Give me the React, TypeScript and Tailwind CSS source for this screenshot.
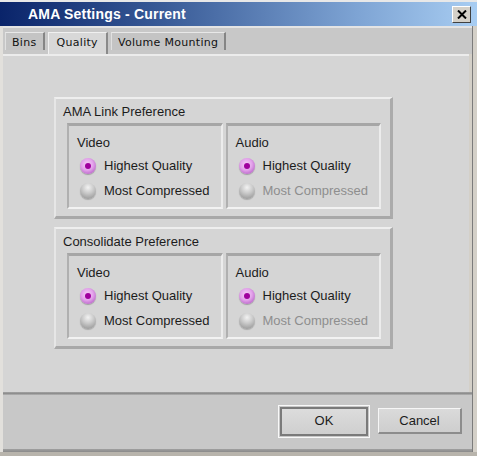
import React from 'react';

const Radio = ({ on }: { on: boolean }) =>
  on ? (
    <span className="w-[16px] h-[16px] shrink-0 rounded-full bg-[radial-gradient(circle_at_45%_40%,#f6d0f8_0%,#e2a2ea_45%,#b45cc4_85%,#9a4aa8_100%)] flex items-center justify-center shadow-[0_1px_1px_rgba(0,0,0,0.25)]">
      <span className="w-[6px] h-[6px] rounded-full bg-[#a0009e]" />
    </span>
  ) : (
    <span className="w-[16px] h-[16px] shrink-0 rounded-full bg-[radial-gradient(circle_at_50%_28%,#f2f2f2_0%,#cbcbcb_40%,#a2a2a2_78%,#828282_100%)] shadow-[0_1px_1px_rgba(0,0,0,0.2)]" />
  );

const Option = ({ on, label, disabled }: { on: boolean; label: string; disabled?: boolean }) => (
  <div className="flex items-center gap-[8px] h-[25px]">
    <Radio on={on} />
    <span className={disabled ? 'text-[#8e8e8e]' : 'text-[#1c1c1c]'}>{label}</span>
  </div>
);

const SubBox = ({ title, disabledSecond }: { title: string; disabledSecond?: boolean }) => (
  <div className="flex-1 h-[86px] border-t-[3px] border-l-[2px] border-t-[#a6a6a6] border-l-[#b0b0b0] border-b-[2px] border-r-[2px] border-b-[#f2f2f2] border-r-[#ececec] pl-[8px] pt-[10px]">
    <div className="text-[#1c1c1c] leading-[14px] mb-[3px]">{title}</div>
    <div className="pl-[3px]">
      <Option on label="Highest Quality" />
      <Option on={false} label="Most Compressed" disabled={disabledSecond} />
    </div>
  </div>
);

const Group = ({ title }: { title: string }) => (
  <div className="w-[339px] h-[122px] border-t-[2px] border-l-[2px] border-t-[#eeeeee] border-l-[#e6e6e6] border-r-[3px] border-b-[3px] border-r-[#ababab] border-b-[#a8a8a8] pl-[11px] pr-[9px]">
    <div className="h-[24px] flex items-center -ml-[4px] pt-[1px] text-[#1c1c1c]">{title}</div>
    <div className="flex gap-[3px]">
      <SubBox title="Video" />
      <SubBox title="Audio" disabledSecond />
    </div>
  </div>
);

const Tab = ({ label, active }: { label: string; active?: boolean }) => (
  <div
    className={
      active
        ? 'h-[22px] self-start mt-[4px] px-[8px] flex items-start pt-[2px] bg-[#d8d8d8] border-t border-l border-t-[#f0f0f0] border-l-[#f0f0f0] border-r-[2px] border-r-[#8a8a8a]'
        : 'h-[18px] self-start mt-[4px] px-[6px] flex items-start pt-[2px] bg-[#c4c4c4] border-t border-l border-t-[#e8e8e8] border-l-[#e0e0e0] border-r-[2px] border-r-[#858585]'
    }
  >
    <span className="tracking-[0.3px] text-[#111]">{label}</span>
  </div>
);

export default function App() {
  return (
    <div className="w-[477px] h-[456px] bg-[#d4d0c8] flex flex-col font-['Liberation_Sans',Arial,sans-serif] text-[13px] overflow-hidden">
      {/* title bar */}
      <div className="h-[26px] shrink-0 border-t-[2px] border-t-[#e8e8e8] bg-[linear-gradient(to_right,#0a246a,#3a5c98_35%,#7ea4d4_75%,#a8cdf2)] flex items-center pl-[28px] pr-[6px]">
        <span className="text-white font-bold text-[14px] tracking-[0.2px]">AMA Settings - Current</span>
        <div className="ml-auto w-[19px] h-[17px] bg-[#d4d0c8] border border-t-[#ffffff] border-l-[#ffffff] border-r-[#404040] border-b-[#404040] flex items-center justify-center">
          <svg width="10" height="9" viewBox="0 0 10 9">
            <path d="M1 0.5 L9 8.5 M9 0.5 L1 8.5" stroke="#000" strokeWidth="2" />
          </svg>
        </div>
      </div>

      <div className="flex-1 flex flex-col border-l-[3px] border-l-[#e2e0dc] mr-[4px] border-r border-r-[#7c7c7c]">
        {/* tabs */}
        <div className="h-[28px] shrink-0 border-t-[2px] border-t-[#e4e4e4] bg-[#c8c8c8] flex items-start pl-[2px] gap-[3px] font-['DejaVu_Sans',Verdana,sans-serif] text-[11px]">
          <Tab label="Bins" />
          <Tab label="Quality" active />
          <Tab label="Volume Mounting" />
        </div>

        {/* content */}
        <div className="h-[338px] shrink-0 bg-[#d5d5d5] border-t-[2px] border-t-[#ececec] mr-[3px] pt-[41px] pl-[51px] flex flex-col gap-[8px]">
          <Group title="AMA Link Preference" />
          <Group title="Consolidate Preference" />
        </div>

        <div className="h-[3px] shrink-0 bg-[linear-gradient(#a4a4a4,#8e8e8e,#b4b4b4)]" />

        {/* buttons */}
        <div className="flex-1 bg-[#c8c8c8] flex items-center justify-end gap-[8px] pr-[10px] pb-[2px]">
          <div className="w-[92px] h-[33px] border border-[#f8f8f8] p-[1px]">
            <div className="w-full h-full border-[2px] border-[#7a7a7a] bg-[linear-gradient(#dcdcdc,#cfcfcf)] flex items-center justify-center text-[#1c1c1c]">
              OK
            </div>
          </div>
          <div className="w-[84px] h-[26px] border-t border-l border-t-[#f6f6f6] border-l-[#f6f6f6] border-r-[2px] border-b-[2px] border-r-[#8c8c8c] border-b-[#8c8c8c] bg-[linear-gradient(#dadada,#cecece)] flex items-center justify-center text-[#1c1c1c]">
            Cancel
          </div>
        </div>

        <div className="h-[3px] shrink-0 bg-[linear-gradient(#a0a0a0,#8a8a8a)]" />
      </div>
      <div className="h-[4px] shrink-0 bg-[#b8b4ac]" />
    </div>
  );
}
